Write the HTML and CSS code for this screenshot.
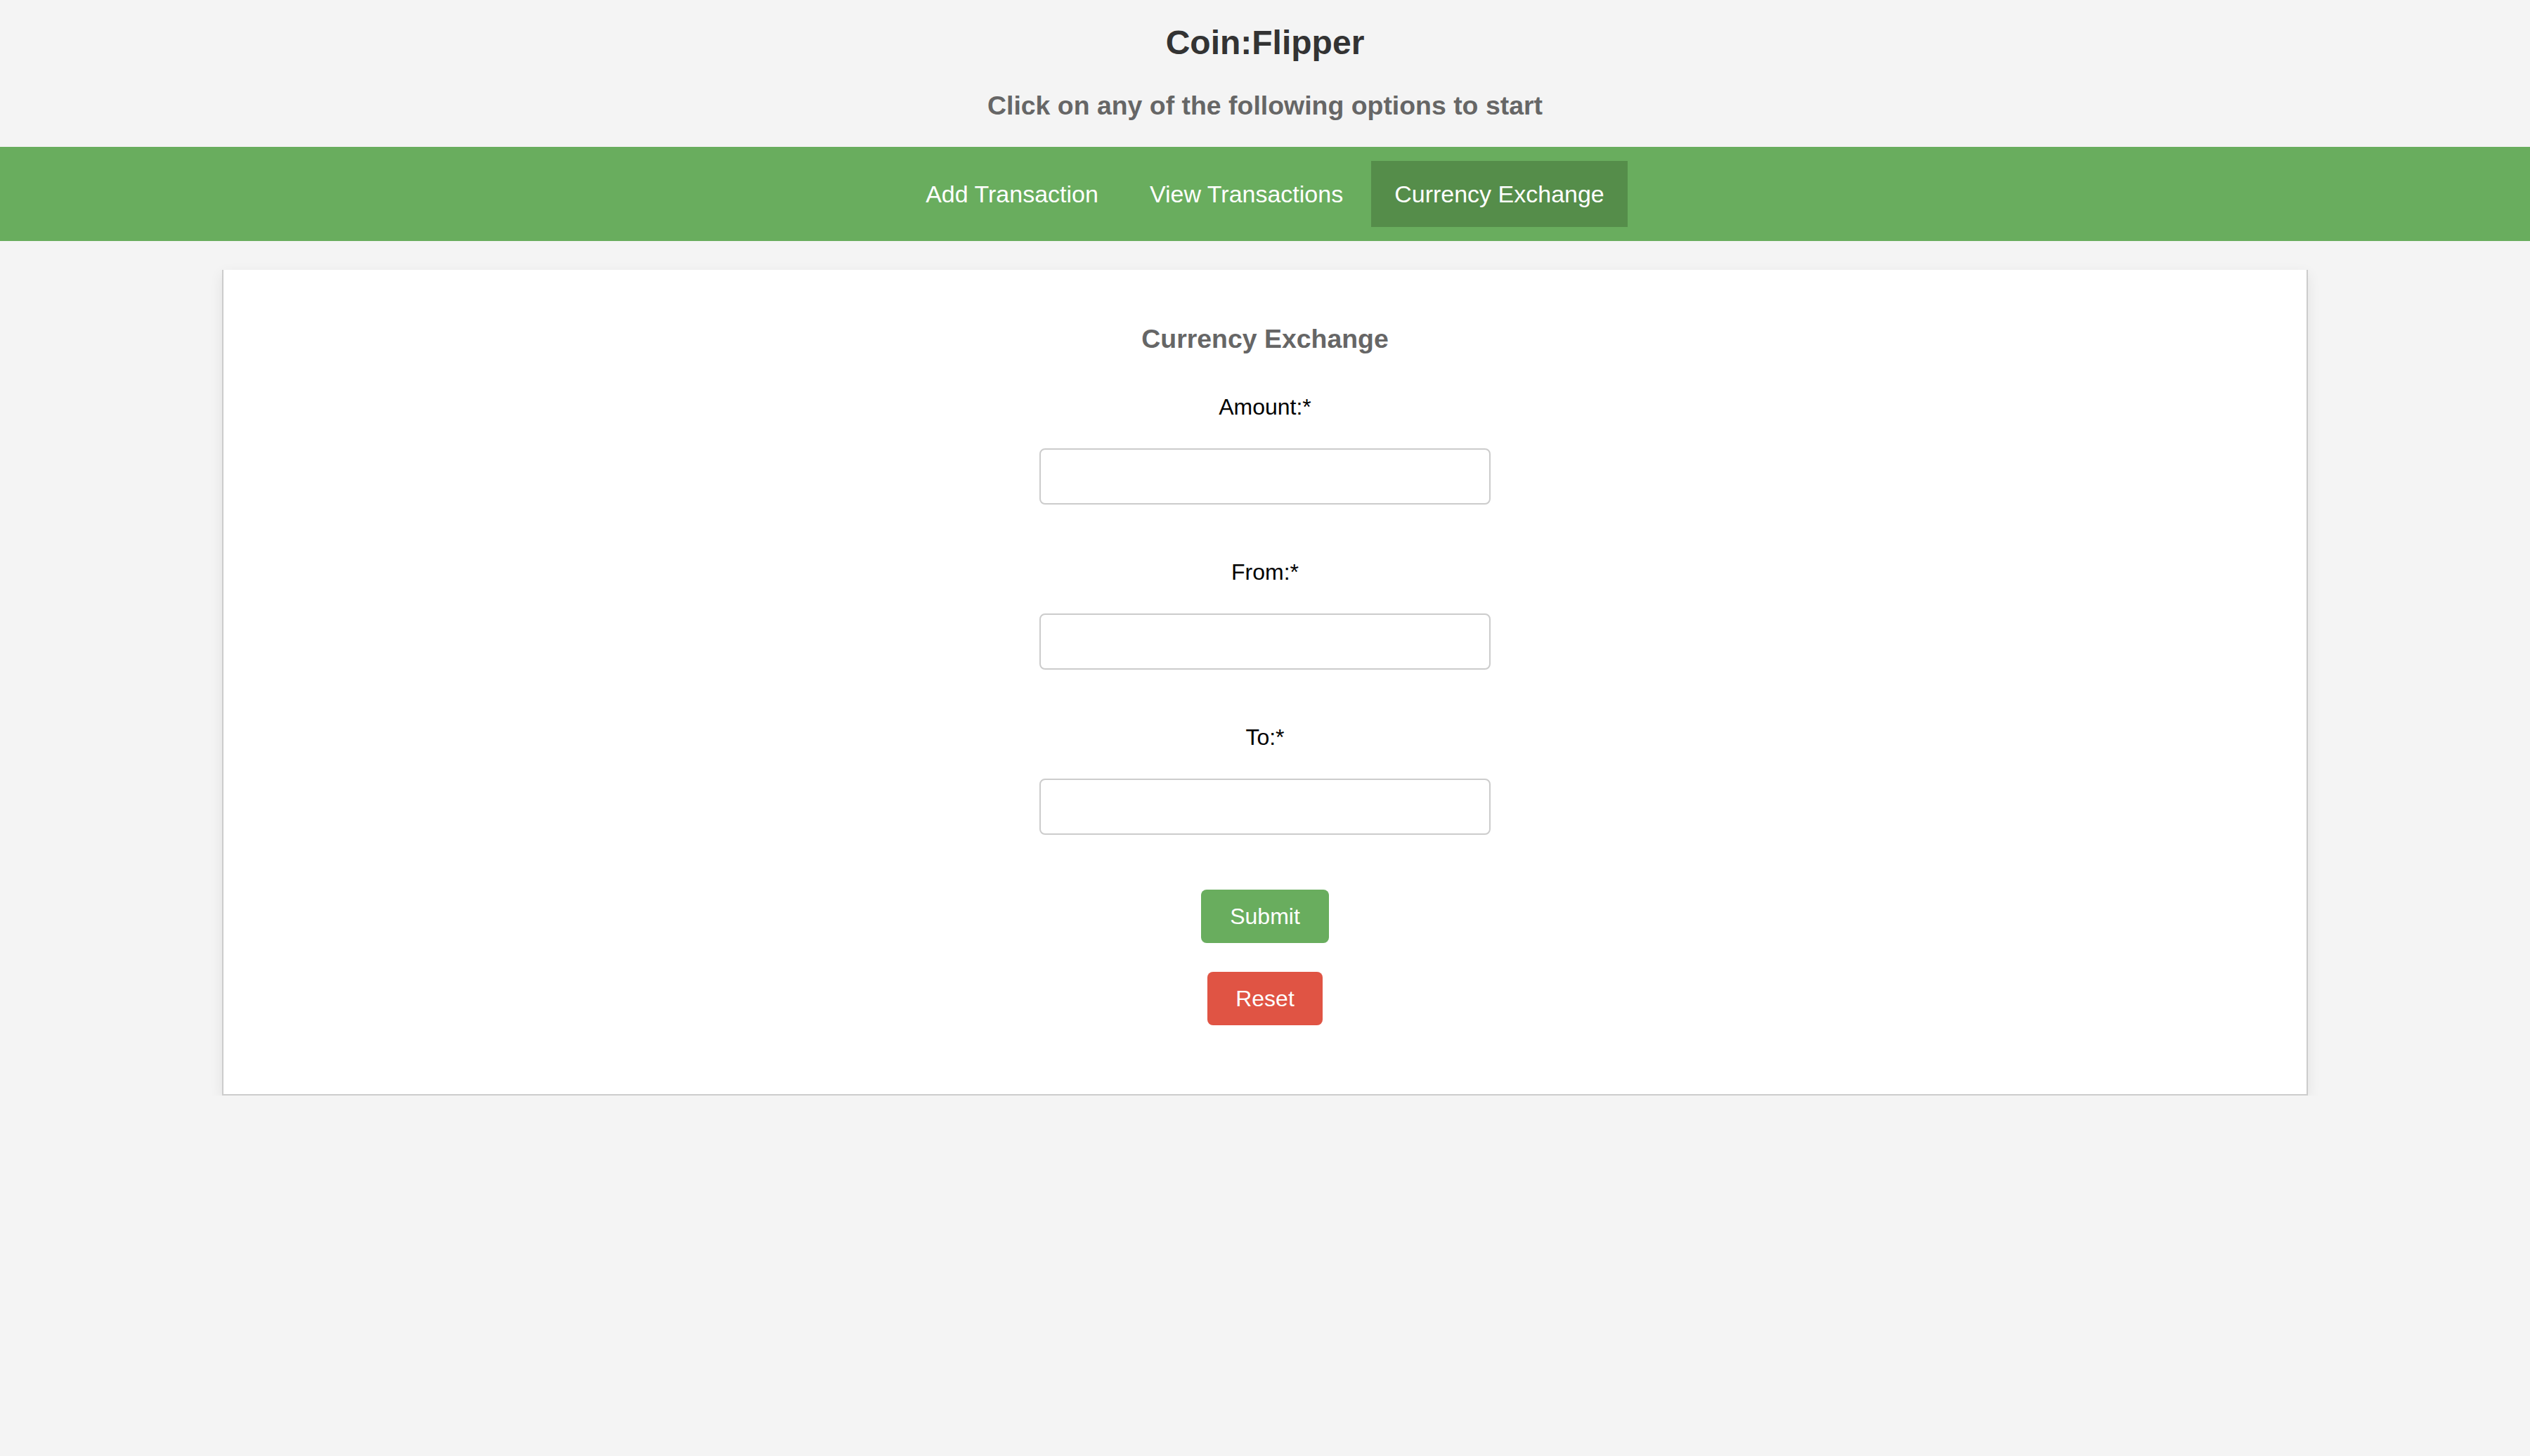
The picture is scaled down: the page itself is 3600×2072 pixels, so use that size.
FILE: index.html
```html
<!DOCTYPE html>
<html lang="en">
<head>
<meta charset="utf-8">
<title>Coin:Flipper</title>
<link rel="stylesheet" href="styles.css">
</head>
<body>
<header class="site-header">
  <h2 class="site-title">Coin:Flipper</h2>
  <h3 class="site-subtitle">Click on any of the following options to start</h3>
</header>
<nav class="main-nav">
  <a class="nav-link" href="#">Add Transaction</a>
  <a class="nav-link" href="#">View Transactions</a>
  <a class="nav-link active" href="#">Currency Exchange</a>
</nav>
<main class="card">
  <h3 class="card-title">Currency Exchange</h3>
  <form class="exchange-form">
    <div class="field">
      <label class="field-label" for="amount">Amount:*</label>
      <input class="field-input" id="amount" type="text">
    </div>
    <div class="field">
      <label class="field-label" for="from">From:*</label>
      <input class="field-input" id="from" type="text">
    </div>
    <div class="field">
      <label class="field-label" for="to">To:*</label>
      <input class="field-input" id="to" type="text">
    </div>
    <div class="actions">
      <button class="btn btn-submit" type="button">Submit</button>
      <button class="btn btn-reset" type="button">Reset</button>
    </div>
  </form>
</main>
</body>
</html>
```
FILE: styles.css
```css
* {
  box-sizing: border-box;
}

html, body {
  margin: 0;
  padding: 0;
}

html {
  background: #f4f4f4;
}

body {
  background: #f4f4f4;
  font-family: "Liberation Sans", Arial, Helvetica, sans-serif;
}

.site-header {
  text-align: center;
  padding-top: 34px;
}

.site-title {
  margin: 0;
  font-size: 48px;
  line-height: 54px;
  font-weight: bold;
  color: #333333;
}

.site-subtitle {
  margin: 41px 0 0;
  font-size: 37.44px;
  line-height: 42px;
  font-weight: bold;
  color: #666666;
}

.main-nav {
  margin-top: 38px;
  background: #69ad5e;
  padding: 20px 0;
  display: flex;
  justify-content: center;
  gap: 7px;
}

.nav-link {
  display: block;
  padding: 28px 33px;
  font-size: 34px;
  line-height: 38px;
  color: #ffffff;
  text-decoration: none;
}

.nav-link.active {
  background: #558d4a;
}

.card {
  width: 2968px;
  margin: 41px auto 0;
  background: #ffffff;
  border: 2px solid #cccccc;
  border-top: none;
  box-shadow: 0 6px 18px rgba(0, 0, 0, 0.08);
  padding: 77px 0 98px;
  display: flex;
  flex-direction: column;
  align-items: center;
}

.card-title {
  margin: 0;
  font-size: 37.44px;
  line-height: 42px;
  font-weight: bold;
  color: #666666;
}

.exchange-form {
  margin-top: 58px;
  display: flex;
  flex-direction: column;
  align-items: center;
  gap: 78px;
}

.field {
  display: flex;
  flex-direction: column;
  align-items: center;
  gap: 41px;
}

.field-label {
  font-size: 32px;
  line-height: 36px;
  color: #000000;
}

.field-input {
  width: 642px;
  height: 80px;
  border: 2px solid #cccccc;
  border-radius: 8px;
  background: #ffffff;
  font-size: 32px;
  font-family: inherit;
  padding: 0 16px;
  outline: none;
}

.actions {
  display: flex;
  flex-direction: column;
  align-items: center;
  gap: 41px;
}

.btn {
  border: none;
  border-radius: 8px;
  font-family: inherit;
  font-size: 32px;
  line-height: 36px;
  color: #ffffff;
  padding: 20px 41px;
  cursor: pointer;
}

.btn-submit {
  background: #69ad5e;
}

.btn-reset {
  background: #e05444;
  padding: 20px 40px;
}
```
